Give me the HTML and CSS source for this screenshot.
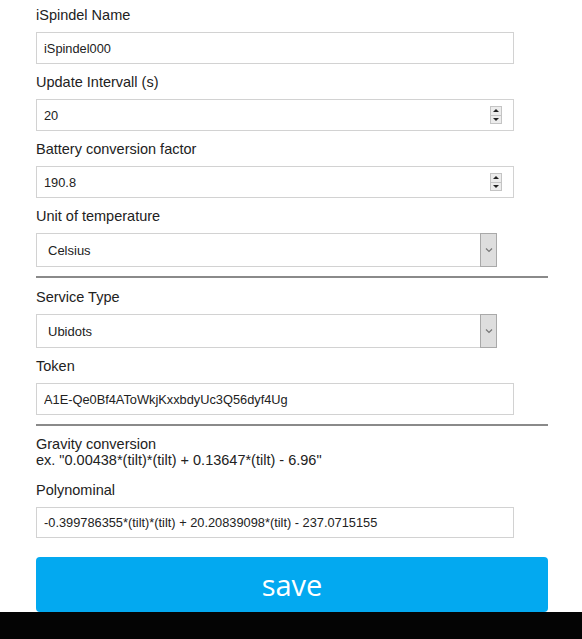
FILE: index.html
```html
<!DOCTYPE html>
<html>
<head>
<meta charset="utf-8">
<link rel="stylesheet" href="styles.css">
</head>
<body>
<main class="form">
  <label class="lbl">iSpindel Name</label>
  <div class="box"><input class="inp" value="iSpindel000"></div>

  <label class="lbl">Update Intervall (s)</label>
  <div class="box"><input class="inp" value="20">
    <span class="spin"><span class="up"></span><span class="down"></span></span>
  </div>

  <label class="lbl">Battery conversion factor</label>
  <div class="box"><input class="inp" value="190.8">
    <span class="spin"><span class="up"></span><span class="down"></span></span>
  </div>

  <label class="lbl">Unit of temperature</label>
  <div class="sel"><span class="sel-text">Celsius</span>
    <span class="sel-btn"><svg width="8" height="6" viewBox="0 0 8 6"><path d="M1 1.5 L4 4.5 L7 1.5" fill="none" stroke="#777" stroke-width="1.2"/></svg></span>
  </div>

  <hr class="rule">

  <label class="lbl">Service Type</label>
  <div class="sel"><span class="sel-text">Ubidots</span>
    <span class="sel-btn"><svg width="8" height="6" viewBox="0 0 8 6"><path d="M1 1.5 L4 4.5 L7 1.5" fill="none" stroke="#777" stroke-width="1.2"/></svg></span>
  </div>

  <label class="lbl">Token</label>
  <div class="box"><input class="inp" value="A1E-Qe0Bf4AToWkjKxxbdyUc3Q56dyf4Ug"></div>

  <hr class="rule">

  <p class="note">Gravity conversion<br>ex. "0.00438*(tilt)*(tilt) + 0.13647*(tilt) - 6.96"</p>

  <label class="lbl">Polynominal</label>
  <div class="box box-last"><input class="inp" value="-0.399786355*(tilt)*(tilt) + 20.20839098*(tilt) - 237.0715155"></div>

  <button class="save">save</button>
</main>
<div class="taskbar"></div>
</body>
</html>
```

FILE: styles.css
```css
html, body {
  margin: 0;
  padding: 0;
  background: #fff;
}
body {
  font-family: "Liberation Sans", Arial, sans-serif;
  color: #222;
  height: 639px;
  display: flex;
  flex-direction: column;
  overflow: hidden;
}
.form {
  width: 512px;
  padding: 6px 0 0 36px;
  display: flex;
  flex-direction: column;
  align-items: flex-start;
  flex: 1;
}
.lbl {
  display: block;
  font-size: 14.5px;
  line-height: 18px;
  margin-bottom: 8px;
}
.box {
  box-sizing: border-box;
  width: 478px;
  height: 32px;
  border: 1px solid #d2d2d2;
  display: flex;
  align-items: center;
  margin-bottom: 9px;
  background: #fff;
}
.box-last { height: 31px; margin-bottom: 19px; }
.inp {
  flex: 1;
  min-width: 0;
  border: 0;
  outline: 0;
  padding: 0 0 0 7px;
  font-family: "Liberation Sans", Arial, sans-serif;
  font-size: 12.8px;
  color: #222;
  background: transparent;
}
.spin {
  width: 10px;
  height: 16px;
  margin-right: 11px;
  display: flex;
  flex-direction: column;
  border: 1px solid #c4c4c4;
  background: #ececec;
}
.spin span {
  flex: 1;
  display: flex;
  align-items: center;
  justify-content: center;
}
.spin .up { border-bottom: 1px solid #c4c4c4; }
.spin .up::before {
  content: "";
  border-left: 3px solid transparent;
  border-right: 3px solid transparent;
  border-bottom: 3px solid #222;
}
.spin .down::before {
  content: "";
  border-left: 3px solid transparent;
  border-right: 3px solid transparent;
  border-top: 3px solid #222;
}
.sel {
  box-sizing: border-box;
  width: 461px;
  height: 34px;
  border: 1px solid #d2d2d2;
  border-right: 0;
  display: flex;
  align-items: stretch;
  margin-bottom: 9px;
}
.sel-text {
  flex: 1;
  display: flex;
  align-items: center;
  padding-left: 11px;
  font-size: 13px;
}
.sel-btn {
  width: 15px;
  margin-top: -1px;
  margin-bottom: -1px;
  background: #dedede;
  border: 1px solid #a9a9a9;
  display: flex;
  align-items: center;
  justify-content: center;
}
.rule {
  width: 512px;
  margin: 0 0 10px 0;
  border: 0;
  height: 2px;
  background: #8a8a8a;
}
.note {
  margin: 0 0 13px 0;
  font-size: 14.5px;
  line-height: 16px;
}
.save {
  width: 512px;
  height: 55px;
  border: 0;
  border-radius: 4px;
  background: #03a9f0;
  color: #fff;
  font-family: "Open Sans", sans-serif;
  font-size: 29px;
  padding: 0;
  line-height: 55px;
}
.taskbar {
  height: 27px;
  background: #040404;
  flex: none;
}
```
